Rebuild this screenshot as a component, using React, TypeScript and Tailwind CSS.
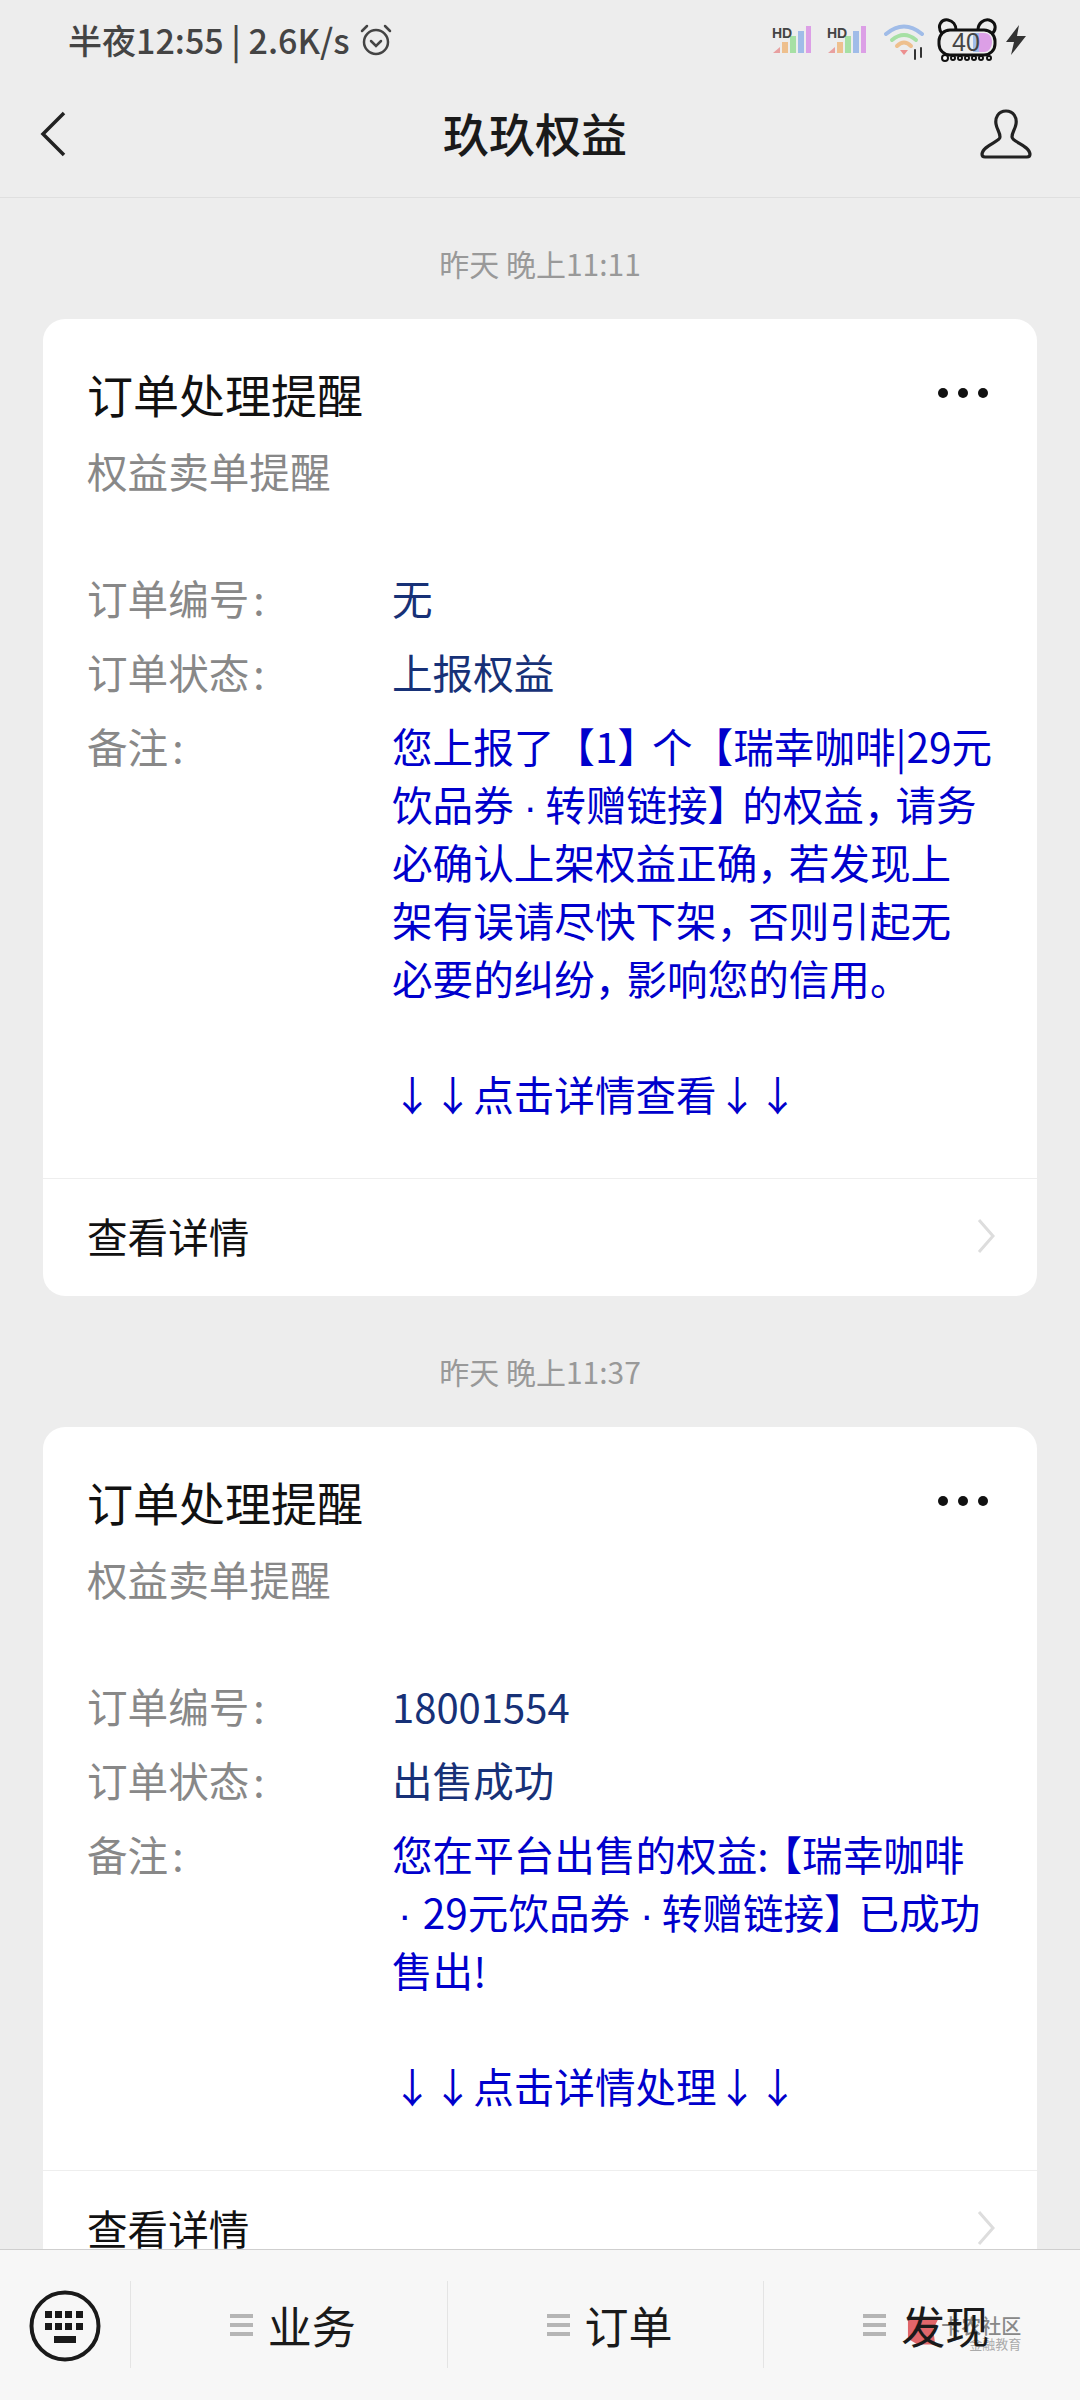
import type { ReactNode } from "react";

const font = "font-['Noto_Sans_CJK_SC','Noto_Sans',sans-serif]";

function SignalIcon() {
  return (
    <svg width="40" height="30" viewBox="0 0 40 30">
      <path d="M1 28 L8 22 V28 Z" fill="#e8a0a0" />
      <rect x="10" y="17" width="6" height="11" fill="#eec08e" />
      <rect x="18" y="11" width="6" height="17" fill="#a6e0a4" />
      <rect x="26" y="6" width="6" height="22" fill="#a0bce8" />
      <rect x="34" y="1" width="5" height="27" fill="#dc9fe6" />
      <text x="0" y="13" fontSize="14" fontWeight="700" fill="#444" fontFamily="Liberation Sans">HD</text>
    </svg>
  );
}

function WifiIcon() {
  return (
    <svg width="42" height="36" viewBox="0 0 42 36" fill="none" strokeLinecap="round">
      <path d="M2 10 Q20 -5 38 10" stroke="#a0bce8" strokeWidth="4" />
      <path d="M8 16 Q20 6 32 16" stroke="#a6e0a4" strokeWidth="4" />
      <path d="M13 22 Q20 15 27 22" stroke="#eec08e" strokeWidth="4" />
      <path d="M16 26 H24 L20 31 Z" fill="#ec8f8f" />
      <path d="M31 26 V35 M37 24 V33" stroke="#333" strokeWidth="2" />
    </svg>
  );
}

function BatteryIcon() {
  return (
    <div className="relative h-[46px] w-[60px]">
      <svg width="60" height="46" viewBox="0 0 60 46" fill="none" className="absolute left-0 top-0">
        <path d="M5 17 C-1 8 5 2 11 3 C16 4 19 8 19 13" stroke="#111" strokeWidth="3" />
        <path d="M41 13 C41 6 47 2 52 3 C59 5 60 12 55 17" stroke="#111" strokeWidth="3" />
        <rect x="2" y="13" width="56" height="25" rx="11" fill="#eeeeee" stroke="#111" strokeWidth="3" />
        <path d="M36 16 H47 C53 16 55 21 55 25 C55 30 52 35 47 35 H36 Z" fill="#dc9fe6" />
        <rect x="36" y="16" width="6" height="19" fill="#a0bce8" />
        <g fill="#fff" stroke="#111" strokeWidth="2">
          <circle cx="8" cy="41" r="3" />
          <circle cx="16" cy="41" r="2" />
          <circle cx="23" cy="41" r="2" />
          <circle cx="30" cy="41" r="2" />
          <circle cx="37" cy="41" r="2" />
          <circle cx="44" cy="41" r="2" />
          <circle cx="52" cy="41" r="2" />
        </g>
      </svg>
      <span className="absolute left-[15px] top-[11px] text-[25px] leading-[29px] text-[#444] font-['Liberation_Sans',sans-serif]">40</span>
    </div>
  );
}

function StatusBar() {
  return (
    <div className="flex h-[80px] items-center justify-between pl-[68px] pr-[54px]">
      <div className="flex items-center gap-[9px]">
        <span className="text-[34px] font-medium leading-none text-[#444]">半夜12:55 | 2.6K/s</span>
        <svg width="34" height="34" viewBox="0 0 34 34" fill="none" stroke="#444" strokeWidth="2.5" strokeLinecap="round">
          <circle cx="17" cy="19" r="12" />
          <path d="M12 18 L17 23 L22 18 M3 8 L8 3 M31 8 L26 3" />
        </svg>
      </div>
      <div className="flex items-center">
        <SignalIcon />
        <div className="ml-[15px]"><SignalIcon /></div>
        <div className="ml-[17px] mt-[4px]"><WifiIcon /></div>
        <div className="ml-[11px]"><BatteryIcon /></div>
        <svg width="20" height="30" viewBox="0 0 20 30" className="ml-[9px]" fill="#333">
          <path d="M13 0 L0 17 H8 L5 30 L20 11 H11 Z" />
        </svg>
      </div>
    </div>
  );
}

function NavBar() {
  return (
    <div className="flex h-[118px] items-center justify-between border-b border-[#dfdfdf] pb-[10px] pl-[40px] pr-[48px]">
      <svg width="26" height="46" viewBox="0 0 26 46" fill="none" stroke="#222" strokeWidth="3.5">
        <path d="M24 2 L3 23 L24 44" />
      </svg>
      <span className="mb-[4px] ml-[24px] text-[46px] font-medium leading-none text-[#1a1a1a]">玖玖权益</span>
      <svg width="52" height="50" viewBox="0 0 52 50" fill="none" stroke="#222" strokeWidth="3.2">
        <path d="M26 2 C18 2 15 9 16 15 C17 21 20 23 20 28 C20 33 3 36 2 45 C2 47 3 48 5 48 H47 C49 48 50 47 50 45 C49 36 32 33 32 28 C32 23 35 21 36 15 C37 9 34 2 26 2 Z" />
      </svg>
    </div>
  );
}

// narrower punctuation, as in the picture
function Comma() {
  return <span className="tracking-[-9px]">，</span>;
}

function Close() {
  return <span className="tracking-[-6px]">】</span>;
}

function Dot() {
  return <span className="tracking-[-1.5px] font-['Liberation_Sans',sans-serif]"> · </span>;
}

type Row = { label: string; value: ReactNode };

function Card({
  rows,
  lines,
  action,
}: {
  rows: Row[];
  lines: ReactNode[];
  action: string;
}) {
  return (
    <div className="mx-[43px] rounded-[22px] bg-white">
      <div className="px-[44px] pb-[55px] pt-[43px]">
        <div className="flex items-center justify-between">
          <span className="text-[46px] leading-[62px] text-[#111]">订单处理提醒</span>
          <div className="mr-[5px] flex gap-[10px]">
            <span className="h-[10px] w-[10px] rounded-full bg-[#111]"></span>
            <span className="h-[10px] w-[10px] rounded-full bg-[#111]"></span>
            <span className="h-[10px] w-[10px] rounded-full bg-[#111]"></span>
          </div>
        </div>
        <div className="mt-[16px] text-[40.6px] leading-[62px] text-[#888]">权益卖单提醒</div>
        <div className="mt-[60px]">
          {rows.map((row, index) => (
            <div key={index} className="flex h-[73.5px] items-center text-[40.6px]">
              <span className="w-[305px] text-[#888]">{row.label}<span className="ml-[4px]">:</span></span>
              <span className="text-[#173177]">{row.value}</span>
            </div>
          ))}
          <div className="flex text-[40.6px] leading-[58px]">
            <span className="mt-[8px] w-[305px] shrink-0 text-[#888]">备注<span className="ml-[4px]">:</span></span>
            <div className="mt-[8px] text-[#0000cc]">
              {lines.map((line, index) => (
                <div key={index} className="h-[58px] whitespace-pre">{line}</div>
              ))}
              <div className="mt-[58px] h-[58px] whitespace-nowrap">{action}</div>
            </div>
          </div>
        </div>
      </div>
      <div className="flex h-[118px] items-center justify-between border-t border-[#eeeeee] pb-[3px] pl-[44px] pr-[41px]">
        <span className="text-[40.6px] text-[#111]">查看详情</span>
        <svg width="20" height="36" viewBox="0 0 20 36" fill="none" stroke="#dddddd" strokeWidth="3">
          <path d="M3 2 L17 18 L3 34" />
        </svg>
      </div>
    </div>
  );
}

function MenuTab({ label, children }: { label: string; children?: ReactNode }) {
  return (
    <div className="relative flex h-[87px] flex-1 items-center justify-center border-l border-[#e4e4e4] pl-[8px]">
      <div className="flex w-[23px] flex-col gap-[5px]">
        <span className="h-[4px] bg-[#b5b5b5]"></span>
        <span className="h-[4px] bg-[#b5b5b5]"></span>
        <span className="h-[4px] bg-[#b5b5b5]"></span>
      </div>
      {children}
      <span className="relative ml-[15px] text-[44px] leading-none text-[#1a1a1a]">{label}</span>
    </div>
  );
}

export default function App() {
  return (
    <div className={`flex h-[2400px] w-[1080px] flex-col overflow-hidden bg-[#ededed] ${font}`}>
      <StatusBar />
      <NavBar />
      <div className="min-h-0 flex-1 overflow-hidden">
        <div className="mb-[37px] mt-[46px] text-center text-[30px] leading-[38px] text-[#999]">昨天 晚上11:11</div>
        <Card
          rows={[
            { label: "订单编号", value: "无" },
            { label: "订单状态", value: "上报权益" },
          ]}
          lines={[
            <>您上报了【1<Close />个【瑞幸咖啡|29元</>,
            <>饮品券<Dot />转赠链接<Close />的权益<Comma />请务</>,
            <>必确认上架权益正确<Comma />若发现上</>,
            <>架有误请尽快下架<Comma />否则引起无</>,
            <>必要的纠纷<Comma />影响您的信用。</>,
          ]}
          action="↓↓点击详情查看↓↓"
        />
        <div className="mb-[37px] mt-[56px] text-center text-[30px] leading-[38px] text-[#999]">昨天 晚上11:37</div>
        <Card
          rows={[
            { label: "订单编号", value: <span className="text-[40px]">18001554</span> },
            { label: "订单状态", value: "出售成功" },
          ]}
          lines={[
            <>您在平台出售的权益:<span className="ml-[-7px]">【</span>瑞幸咖啡</>,
            <><span className="pl-[6px] font-['Liberation_Sans',sans-serif]">· </span>29元饮品券<Dot />转赠链接<Close />已成功</>,
            "售出!",
          ]}
          action="↓↓点击详情处理↓↓"
        />
      </div>
      <div className="relative flex h-[151px] shrink-0 items-start border-t border-[#cfcfcf] bg-[#f7f7f7] pt-[31px]">
        <div className="flex w-[130px] shrink-0 justify-center pt-[8px]">
          <svg width="72" height="74" viewBox="0 0 72 74" fill="none">
            <circle cx="36" cy="37" r="33.5" stroke="#1a1a1a" strokeWidth="4" />
            <g fill="#1a1a1a">
              <rect x="16" y="22" width="7" height="7" />
              <rect x="26" y="22" width="7" height="7" />
              <rect x="36" y="22" width="7" height="7" />
              <rect x="47" y="22" width="7" height="7" />
              <rect x="16" y="34" width="7" height="7" />
              <rect x="26" y="34" width="7" height="7" />
              <rect x="36" y="34" width="7" height="7" />
              <rect x="47" y="34" width="7" height="7" />
              <rect x="25" y="47" width="22" height="7" />
            </g>
          </svg>
        </div>
        <MenuTab label="业务" />
        <MenuTab label="订单" />
        <MenuTab label="发现">
          <div className="absolute left-[142px] top-[34px] flex items-start whitespace-nowrap">
            <svg width="35" height="32" viewBox="0 0 36 32" className="shrink-0">
              <path d="M2 2 H34 L28 14 L30 30 H12 L2 24 Z" fill="#e0666a" />
            </svg>
            <div className="w-[80px]">
              <div className="text-[20px] font-medium leading-[22px] text-[#888]">卡农社区</div>
              <div className="text-right text-[13px] leading-[14px] text-[#aaa]">金融教育</div>
            </div>
          </div>
        </MenuTab>
      </div>
    </div>
  );
}
